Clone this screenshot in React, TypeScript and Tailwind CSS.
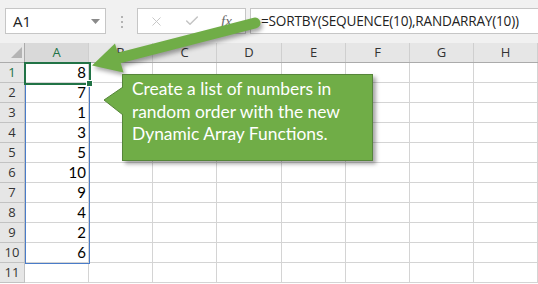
import { X, Check } from 'lucide-react';

const COLS = ['A', 'B', 'C', 'D', 'E', 'F', 'G', 'H'];
const VALUES = [8, 7, 1, 3, 5, 10, 9, 4, 2, 6];

function colWidth(c: string) {
  return c === 'D' ? 'w-[65px]' : 'w-[64px]';
}

function FormulaBar() {
  return (
    <div className="h-[43px] bg-[#f1f1f1] flex items-start pt-[8px] pl-[5px]">
      {/* name box */}
      <div className="w-[101px] h-[26px] bg-white border border-[#c6c6c6] flex items-center justify-between pl-[7px] pr-[5px]">
        <span className="text-[15px] text-[#222] font-['Open_Sans',sans-serif]">A1</span>
        <svg width="9" height="5" viewBox="0 0 9 5">
          <path d="M0 0 L9 0 L4.5 5 Z" fill="#8a8a8a" />
        </svg>
      </div>
      {/* drag dots */}
      <div className="ml-[15px] mt-[8px] flex flex-col gap-[3px]">
        <div className="w-[2px] h-[2px] bg-[#b3b3b3]" />
        <div className="w-[2px] h-[2px] bg-[#b3b3b3]" />
        <div className="w-[2px] h-[2px] bg-[#b3b3b3]" />
      </div>
      {/* cancel / enter / fx */}
      <div className="ml-[14px] w-[109px] h-[26px] bg-white border border-[#c6c6c6] flex items-center pl-[11px]">
        <X className="w-[15px] h-[15px] text-[#c4c4c4]" strokeWidth={1.5} />
        <Check className="ml-[20px] w-[16px] h-[16px] text-[#c4c4c4]" strokeWidth={2.2} />
        <span className="ml-[21px] text-[15px] italic text-[#6a6a6a] font-['Liberation_Serif',serif]">fx</span>
      </div>
      {/* formula input */}
      <div className="ml-[4px] flex-1 h-[26px] bg-white border border-[#c6c6c6] -mr-[4px] flex items-center pl-[10px]">
        <span className="text-[13.6px] text-[#222] tracking-[-0.2px] font-['Open_Sans',sans-serif] whitespace-nowrap">
          =SORTBY(SEQUENCE(10),RANDARRAY(10))
        </span>
      </div>
    </div>
  );
}

function Grid() {
  return (
    <div className="flex flex-col font-['Open_Sans',sans-serif]">
      {/* column headers */}
      <div className="flex h-[20px] bg-[#e6e6e6] border-b border-[#ababab]">
        <div className="w-[25px] shrink-0 border-r border-[#ababab] relative">
          <svg className="absolute left-[11px] top-[4px]" width="12" height="12" viewBox="0 0 12 12">
            <path d="M11 0 L11 11 L0 11 Z" fill="#b4b4b4" />
          </svg>
        </div>
        {COLS.map((c) => (
          <div
            key={c}
            className={`${colWidth(c)} shrink-0 flex items-center justify-center text-[13px] border-r border-[#cfcfcf] ${
              c === 'A' ? 'bg-[#d9d9d9] text-[#217346]' : 'text-[#333]'
            }`}
          >
            {c}
          </div>
        ))}
      </div>
      {/* rows */}
      {Array.from({ length: 11 }).map((_, i) => (
        <div key={i} className="flex h-[20px]">
          <div
            className={`w-[25px] shrink-0 flex items-center justify-center text-[13px] bg-[#e6e6e6] border-r border-b border-[#c2c2c2] ${
              i === 0 ? 'bg-[#d9d9d9] text-[#217346]' : 'text-[#333]'
            }`}
          >
            {i + 1}
          </div>
          {COLS.map((c) => (
            <div
              key={c}
              className={`${colWidth(c)} shrink-0 border-r border-b border-[#d4d4d4] flex items-center justify-end pr-[2px] text-[15px] text-black font-['Lato',sans-serif]`}
            >
              {c === 'A' && i < 10 ? VALUES[i] : ''}
            </div>
          ))}
        </div>
      ))}
    </div>
  );
}

export default function App() {
  return (
    <div className="relative w-[538px] h-[284px] overflow-hidden bg-white">
      <FormulaBar />
      <Grid />

      {/* spill range border A1:A10 */}
      <div className="absolute left-[25px] top-[62px] w-[65px] h-[202px] border border-[#4a7cc9] pointer-events-none" />
      {/* active cell A1 */}
      <div className="absolute left-[24px] top-[62px] w-[67px] h-[23px] border-2 border-[#217346] pointer-events-none" />
      <div className="absolute left-[86px] top-[80px] w-[7px] h-[7px] bg-[#217346] border border-white pointer-events-none" />

      {/* arrow */}
      <svg
        className="absolute left-0 top-0 pointer-events-none drop-shadow-[2px_3px_2px_rgba(0,0,0,0.35)]"
        width="538"
        height="284"
        viewBox="0 0 538 284"
      >
        <line x1="255" y1="23" x2="119" y2="58" stroke="#70ad47" strokeWidth="11" strokeLinecap="round" />
        <path d="M92 65.5 L115 43.5 L123.5 72.5 Z" fill="#70ad47" />
      </svg>

      {/* callout */}
      <div className="absolute left-[122px] top-[74px] w-[251px] h-[87px] bg-[#70ad47] border border-[#56853a] shadow-[3px_3px_4px_rgba(0,0,0,0.35)] pl-[9px] pt-[3px]">
        <p className="text-[17.4px] leading-[22.5px] text-white font-['Lato',sans-serif]">
          Create a list of numbers in
          <br />
          random order with the new
          <br />
          Dynamic Array Functions.
        </p>
      </div>
      <svg className="absolute left-[103px] top-[86px] pointer-events-none" width="21" height="31" viewBox="0 0 21 31">
        <path d="M21 1 L20 1 L1 14 L20 29 L21 29 Z" fill="#70ad47" />
        <path d="M20 1 L1 14 L20 29" fill="none" stroke="#56853a" strokeWidth="1" />
      </svg>
    </div>
  );
}
